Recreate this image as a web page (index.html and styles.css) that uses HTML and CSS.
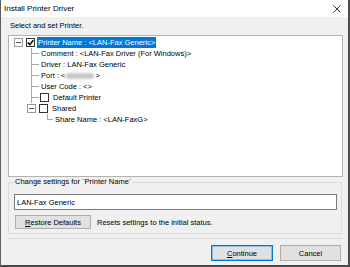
FILE: index.html
```html
<!DOCTYPE html>
<html lang="en">
<head>
    <meta charset="UTF-8">
    <meta name="viewport" content="width=device-width, initial-scale=1.0">
    <title>Install Printer Driver</title>
    <link rel="stylesheet" href="styles.css">
</head>
<body>
    <div class="window">
        <div class="titlebar">
            <span class="title">Install Printer Driver</span>
            <svg class="close" width="8" height="8" viewBox="0 0 8 8">
                <path d="M0.5 0.5 L7.5 7.5 M7.5 0.5 L0.5 7.5" stroke="#222" stroke-width="0.9" fill="none"/>
            </svg>
        </div>

        <div class="content">
            <div class="caption">Select and set Printer.</div>

            <div class="tree">
                <div class="row root">
                    <span class="toggle"></span>
                    <span class="check">
                        <svg width="7" height="7" viewBox="0 0 7 7"><path d="M0.8 3.6 L2.7 5.6 L6.3 1.2" stroke="#000" stroke-width="1.5" fill="none"/></svg>
                    </span>
                    <span class="label selected">Printer Name : &lt;LAN-Fax Generic&gt;</span>
                </div>
                <div class="row lvl1">
                    <span class="branch"></span>
                    <span class="label">Comment : &lt;LAN-Fax Driver (For Windows)&gt;</span>
                </div>
                <div class="row lvl1">
                    <span class="branch"></span>
                    <span class="label">Driver : LAN-Fax Generic</span>
                </div>
                <div class="row lvl1">
                    <span class="branch"></span>
                    <span class="label">Port : &lt;<span class="blur"></span>&gt;</span>
                </div>
                <div class="row lvl1">
                    <span class="branch"></span>
                    <span class="label">User Code : &lt;&gt;</span>
                </div>
                <div class="row lvl1">
                    <span class="branch"></span>
                    <span class="check small"></span>
                    <span class="label">Default Printer</span>
                </div>
                <div class="row lvl1 parent">
                    <span class="toggle"></span>
                    <span class="check small"></span>
                    <span class="label">Shared</span>
                </div>
                <div class="row lvl2">
                    <span class="branch last"></span>
                    <span class="label">Share Name : &lt;LAN-FaxG&gt;</span>
                </div>
            </div>

            <fieldset class="settings">
                <legend>Change settings for `Printer Name`</legend>
                <input class="value" type="text" value="LAN-Fax Generic">
                <div class="restore-row">
                    <button class="btn restore"><u>R</u>estore Defaults</button>
                    <span class="hint">Resets settings to the initial status.</span>
                </div>
            </fieldset>

            <div class="separator"></div>

            <div class="actions">
                <button class="btn default"><u>C</u>ontinue</button>
                <button class="btn">Cancel</button>
            </div>
        </div>
    </div>
</body>
</html>
```

FILE: styles.css
```css
* {
    box-sizing: border-box;
}
body {
    margin: 0;
    font-family: 'Liberation Sans', Arial, sans-serif;
    font-size: 7.5px;
    color: #000;
    background: #fff;
}
.window {
    width: 350px;
    height: 267px;
    background: #f0f0f0;
    border-left: 1px solid #5f5f5f;
    border-right: 2px solid #4a4a4a;
    border-bottom: 2px solid #4a4a4a;
    display: flex;
    flex-direction: column;
}
.titlebar {
    height: 17px;
    background: #fff;
    display: flex;
    align-items: center;
    justify-content: space-between;
    padding: 0 7px 0 3px;
    font-size: 8px;
}
.content {
    flex: 1;
    padding: 3px 5px 0 7px;
    display: flex;
    flex-direction: column;
}
.caption {
    height: 11px;
    line-height: 11px;
    margin: 0 0 4px 2px;
}

/* tree */
.tree {
    height: 142px;
    background: #fff;
    border: 1px solid #b4b4b4;
    padding-top: 1px;
}
.row {
    height: 11px;
    display: flex;
    align-items: center;
    white-space: nowrap;
}
.row.root {
    padding-left: 5px;
}
.row.lvl1 {
    padding-left: 22px;
}
.row.parent {
    padding-left: 18px;
}
.row.lvl2 {
    padding-left: 38px;
}
.toggle {
    width: 9px;
    height: 9px;
    border: 1px solid #999;
    background: #fff linear-gradient(#555, #555) center / 5px 1px no-repeat;
    margin-right: 3px;
}
.check {
    width: 9px;
    height: 9px;
    border: 1px solid #333;
    background: #fff;
    display: flex;
    align-items: center;
    justify-content: center;
    margin-right: 2px;
}
.check.small {
    margin-right: 3px;
}
.branch {
    width: 8px;
    height: 11px;
    margin-right: 1px;
    background:
        linear-gradient(#a8a8a8, #a8a8a8) 0 0 / 1px 100% no-repeat,
        linear-gradient(#a8a8a8, #a8a8a8) 0 5px / 100% 1px no-repeat;
}
.branch.last {
    width: 6px;
    margin-right: 1px;
    background:
        linear-gradient(#a8a8a8, #a8a8a8) 0 0 / 1px 6px no-repeat,
        linear-gradient(#a8a8a8, #a8a8a8) 0 5px / 100% 1px no-repeat;
}
.label {
    line-height: 11px;
    padding: 0 1px;
}
.label.selected {
    background: #0078d7;
    color: #fff;
}
.blur {
    display: inline-block;
    width: 28px;
    height: 6px;
    margin: 0 1px;
    background: #c8c8c8;
    border-radius: 3px;
    filter: blur(1.2px);
    vertical-align: middle;
}

/* settings group */
.settings {
    margin: 0 1px 0 0;
    border: 1px solid #dcdcdc;
    padding: 7px 4px 4px 5px;
}
.settings legend {
    padding: 0 1px;
    line-height: 10px;
}
.value {
    display: block;
    width: 100%;
    height: 16px;
    border: 1px solid #7a7a7a;
    background: #fff;
    padding: 0 2px;
    font: inherit;
    color: #000;
    outline: none;
}
.restore-row {
    display: flex;
    align-items: center;
    margin-top: 5px;
}
.btn {
    height: 15px;
    padding: 0;
    border: 1px solid #adadad;
    background: #e1e1e1;
    font: inherit;
    color: #000;
}
.btn.restore {
    width: 76px;
    height: 14px;
    margin: 0 6px 0 1px;
}
.separator {
    margin-top: 4px;
    border-top: 1px solid #d9d9d9;
}
.actions {
    display: flex;
    justify-content: flex-end;
    gap: 7px;
    margin: 6px 2px 0 0;
}
.actions .btn {
    width: 61px;
    height: 16px;
}
.btn.default {
    width: 62px;
    border-color: #0078d7;
    box-shadow: inset 0 0 0 1px #8cbde8;
}
```
